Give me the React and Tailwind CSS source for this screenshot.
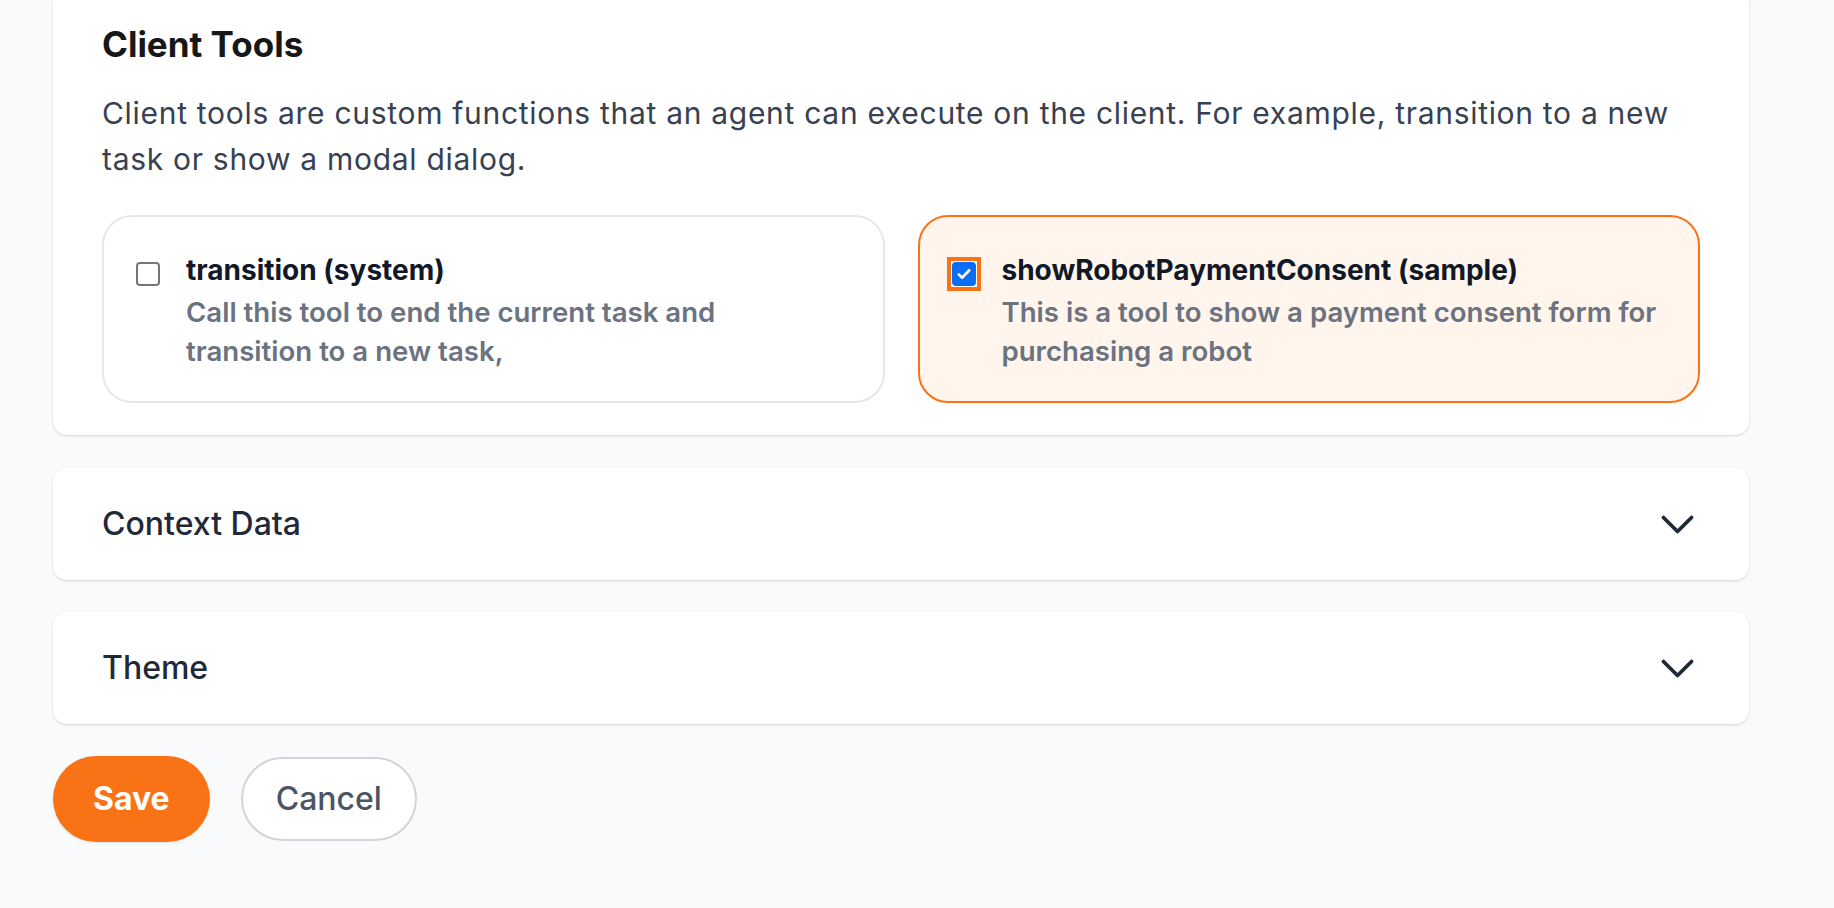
import { useState } from "react"

function ChevronDown() {
    return (
        <svg width="45" height="45" viewBox="0 0 24 24" fill="none" stroke="#1f2937" strokeWidth="2" strokeLinecap="round" strokeLinejoin="round">
            <path d="m19.5 8.25-7.5 7.5-7.5-7.5" />
        </svg>
    )
}

function ToolCard({ title, description, checked, onToggle }) {
    return (
        <div
            onClick={onToggle}
            className={
                checked
                    ? "flex gap-[26px] rounded-[30px] border-2 border-[#f97316] bg-[#fff5ec] pl-[32px] pr-[30px] pt-[33px] pb-[30px] cursor-pointer"
                    : "flex gap-[26px] rounded-[30px] border-2 border-[#e5e7eb] bg-white pl-[32px] pr-[30px] pt-[33px] pb-[30px] cursor-pointer"
            }
        >
            {checked ? (
                <div className="mt-[7px] -mx-[5px] w-[34px] h-[34px] shrink-0 border-[4px] border-[#f97316] bg-white p-[1px]">
                    <div className="w-[24px] h-[24px] rounded-[4px] bg-[#0b6cf5] flex items-center justify-center">
                        <svg width="18" height="18" viewBox="0 0 24 24" fill="none" stroke="white" strokeWidth="3.6" strokeLinecap="round" strokeLinejoin="round">
                            <path d="M5 12.5l4.5 4.5L19 7" />
                        </svg>
                    </div>
                </div>
            ) : (
                <div className="mt-[12px] w-[24px] h-[24px] shrink-0 rounded-[4px] border-2 border-[#767676] bg-white" />
            )}
            <div className="min-w-0 max-w-[658px]">
                <p className="mb-[3px] text-[28px] leading-[40px] font-bold text-[#111827]">{title}</p>
                <p className="text-[27.6px] leading-[39px] font-semibold text-[#6b7280]">{description}</p>
            </div>
        </div>
    )
}

function Collapsible({ title }) {
    return (
        <div className="h-[112px] bg-white rounded-[14px] shadow-[0_1px_3px_rgba(0,0,0,0.1),0_1px_2px_rgba(0,0,0,0.06)] flex items-center justify-between px-[49px]">
            <span className="text-[32px] font-medium text-[#1f2937]">{title}</span>
            <ChevronDown />
        </div>
    )
}

export default function App() {
    const [tools, setTools] = useState({ transition: false, robot: true })

    return (
        <div className="min-h-screen bg-[#f9fafb] font-['Inter',sans-serif] overflow-hidden">
            <div className="pl-[53px] pr-[85px]">
                <section className="bg-white rounded-b-[14px] shadow-[0_1px_3px_rgba(0,0,0,0.1),0_1px_2px_rgba(0,0,0,0.06)] px-[49px] pt-[20px] pb-[32px]">
                    <h2 className="text-[35px] leading-[49px] font-bold text-[#171717]">Client Tools</h2>
                    <p className="mt-[21px] text-[30px] leading-[46px] tracking-[0.7px] text-[#374151]">
                        Client tools are custom functions that an agent can execute on the client. For example, transition to a new task or show a modal dialog.
                    </p>
                    <div className="mt-[33px] grid grid-cols-2 gap-[33px]">
                        <ToolCard
                            title="transition (system)"
                            description="Call this tool to end the current task and transition to a new task,"
                            checked={tools.transition}
                            onToggle={() => setTools({ ...tools, transition: !tools.transition })}
                        />
                        <ToolCard
                            title="showRobotPaymentConsent (sample)"
                            description="This is a tool to show a payment consent form for purchasing a robot"
                            checked={tools.robot}
                            onToggle={() => setTools({ ...tools, robot: !tools.robot })}
                        />
                    </div>
                </section>

                <div className="mt-[33px]">
                    <Collapsible title="Context Data" />
                </div>
                <div className="mt-[32px]">
                    <Collapsible title="Theme" />
                </div>

                <div className="mt-[32px] flex items-center gap-[31px]">
                    <button className="h-[86px] px-[40px] rounded-full bg-[#f97316] text-white text-[32px] font-bold shadow-[0_1px_3px_rgba(0,0,0,0.1)]">
                        Save
                    </button>
                    <button className="h-[84px] px-[33px] rounded-full border-2 border-[#d1d5db] bg-white text-[#4b5563] text-[32px] font-medium">
                        Cancel
                    </button>
                </div>
            </div>
        </div>
    )
}
